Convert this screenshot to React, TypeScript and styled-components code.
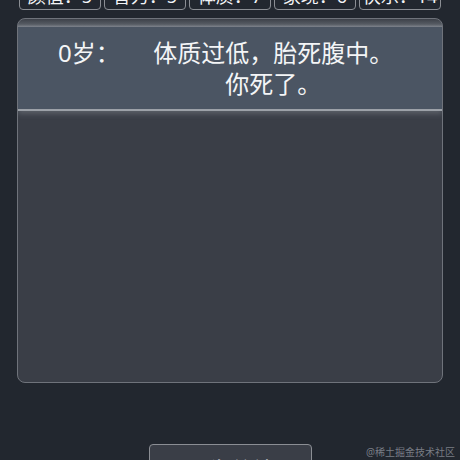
import React from 'react';
import styled, { createGlobalStyle } from 'styled-components';

const GlobalStyle = createGlobalStyle`
  html, body {
    margin: 0;
    padding: 0;
    background-color: #22272f;
    overflow: hidden;
  }
  body {
    font-family: 'Noto Sans', 'Noto Sans CJK SC', sans-serif;
    color: #f4f5f7;
  }
`;

const Page = styled.main`
  position: relative;
  width: 460px;
  height: 460px;
  padding: 0 17px;
  box-sizing: border-box;
  overflow: hidden;
`;

const StatRow = styled.ul`
  display: flex;
  gap: 3px;
  margin: -20px 2px 0 2px;
  padding: 0;
  list-style: none;
`;

const Stat = styled.li`
  flex: 1;
  padding: 3px 0 1px 0;
  border: 1px solid #8b8e94;
  border-radius: 4px;
  font-size: 18px;
  line-height: 24px;
  text-align: center;
  white-space: nowrap;
`;

const Panel = styled.section`
  margin-top: 8px;
  height: 365px;
  box-sizing: border-box;
  border: 1px solid #6f737b;
  border-radius: 8px;
  padding-top: 8px;
  background: linear-gradient(
    to bottom,
    #3d4149 0px,
    #555a62 5px,
    #7e838b 8px,
    #3a3e47 8px
  );
  overflow: hidden;
`;

const Entry = styled.div`
  display: flex;
  align-items: flex-start;
  padding: 10px 15px 10px 40px;
  background-color: #4b5563;
  border-bottom: 2px solid #9ca1a8;
  box-shadow: 0 3px 5px rgba(150, 155, 162, 0.35);
  font-size: 24px;
  line-height: 31px;
`;

const Age = styled.span`
  flex: none;
`;

const Event = styled.div`
  flex: 1;
  text-align: center;

  span {
    display: block;
  }
`;

const Footer = styled.div`
  display: flex;
  justify-content: center;
  margin-top: 61px;
`;

const Button = styled.button`
  width: 163px;
  height: 40px;
  border: 1px solid #8b8e94;
  border-radius: 4px;
  background-color: #3a3e47;
  color: #f4f5f7;
  font-family: inherit;
  font-size: 22px;
  line-height: 28px;
  padding: 10px 0 0 0;
  box-sizing: border-box;
  cursor: pointer;
`;

const Watermark = styled.div`
  position: absolute;
  right: 5px;
  bottom: 1px;
  font-size: 10px;
  color: rgba(150, 154, 162, 0.75);
`;

const stats = [
  { label: '颜值', value: 5 },
  { label: '智力', value: 5 },
  { label: '体质', value: 7 },
  { label: '家境', value: 6 },
  { label: '快乐', value: 14 },
];

const App = (): JSX.Element => {
  return (
    <>
      <GlobalStyle />
      <Page>
        <StatRow>
          {stats.map((s) => (
            <Stat key={s.label}>
              {s.label}：{s.value}
            </Stat>
          ))}
        </StatRow>
        <Panel>
          <Entry>
            <Age>0岁：</Age>
            <Event>
              <span>体质过低，胎死腹中。</span>
              <span>你死了。</span>
            </Event>
          </Entry>
        </Panel>
        <Footer>
          <Button>人生总结</Button>
        </Footer>
        <Watermark>@稀土掘金技术社区</Watermark>
      </Page>
    </>
  );
};

export default App;
